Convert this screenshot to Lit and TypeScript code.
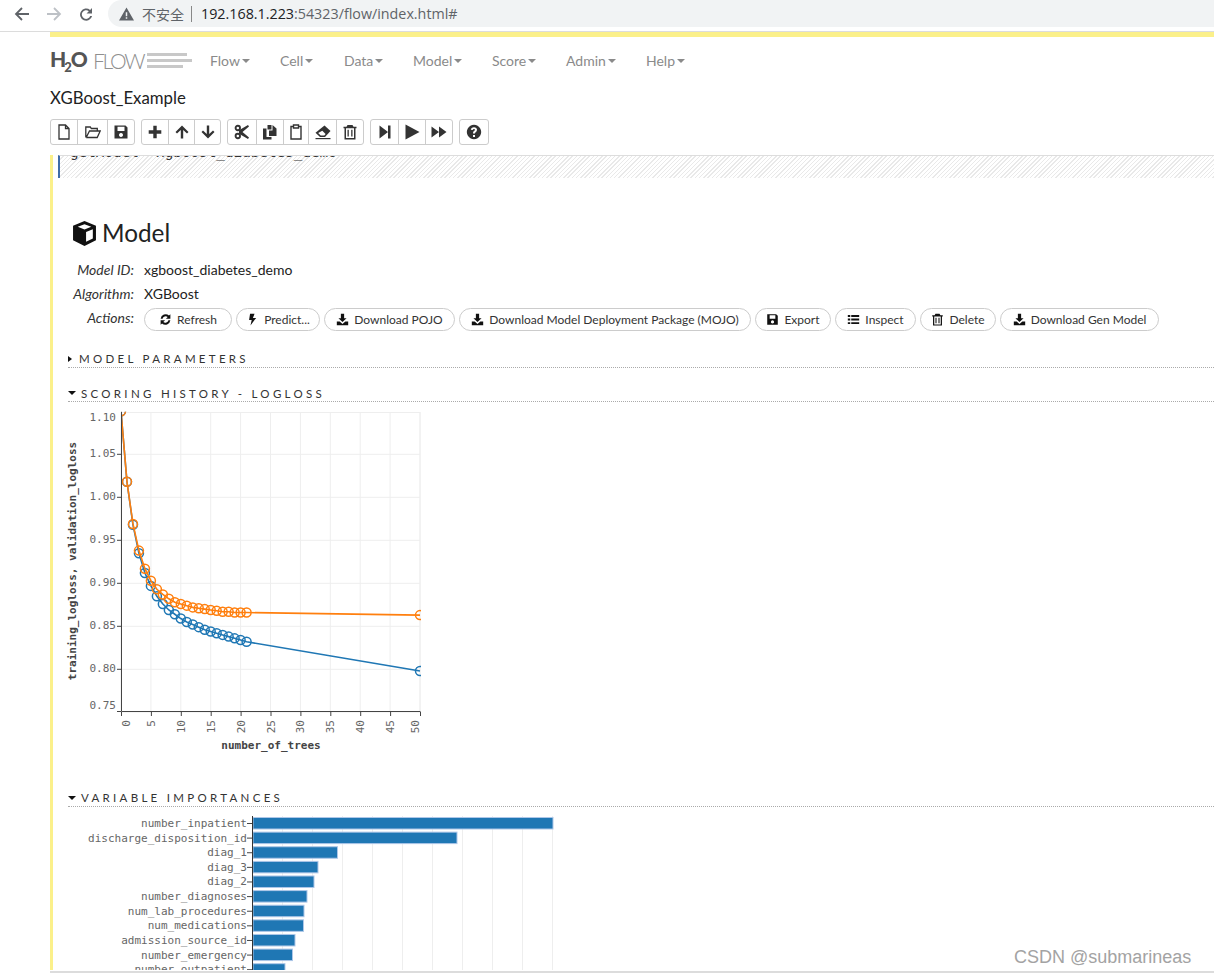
import { LitElement, html, css, svg } from "lit";
import { customElement } from "lit/decorators.js";

const ICONS: Record<string, any> = {
  file: svg`<path d="M3 1h6.500l3.500 3.500V15H3z M9.500 1v3.500H13" fill="none" stroke="currentColor" stroke-width="1.300"/>`,
  open: svg`<path d="M.8 13.500V3h4.500l1 1.500h6V7H4.500L1.200 13.500 M1.200 13.500h11l3-6.500H4.500" fill="none" stroke="currentColor" stroke-width="1.300"/>`,
  save: svg`<path fill-rule="evenodd" d="M1.500 1.500h11l2 2v11h-13z M4.500 2.800v4.200h7V2.800z M8 9a2 2 0 1 0 .01 0z"/>`,
  plus: svg`<path d="M6.300 1.700h3.400v4.600H14.300v3.400H9.700v4.600H6.300V9.700H1.700V6.300h4.600z"/>`,
  up: svg`<path d="M8 1.500l6.500 6.500-1.500 1.500-3.800-3.600V14.500H6.800V5.900L3 9.500 1.500 8z"/>`,
  down: svg`<path d="M8 14.500l6.500-6.500L13 6.500l-3.800 3.600V1.500H6.800v8.600L3 6.500 1.500 8z"/>`,
  cut: svg`<path d="M5 6.300L14 1l1 1.500L8.500 8l6.500 5.500-1 1.500L5 9.700"/><circle cx="3.800" cy="4" r="2.200" fill="none" stroke="currentColor" stroke-width="1.900"/><circle cx="3.800" cy="12" r="2.200" fill="none" stroke="currentColor" stroke-width="1.900"/>`,
  copy: svg`<path d="M5.500 1h4v4.500h-4z M10.500 1l4 3.500V12H7V6.500h3.500z M1 4.500h3.500V13H9.500V15.500H1z"/>`,
  paste: svg`<path d="M5.500 2.500H3V15h10V2.500h-2.500 M5.500 1h5v3h-5z" fill="none" stroke="currentColor" stroke-width="1.400"/>`,
  eraser: svg`<path d="M9.500 1.500L15.500 7l-5.500 6H5L.5 8.800z"/><path d="M3.200 9l2.500 2.400h3.600l1.300-1.400-3.300-3.200z" fill="#fff"/><path d="M.5 14h15v1.200H.5z"/>`,
  trash: svg`<path fill-rule="evenodd" d="M5.500 1h5l1 1.800h3v1.500h-1V15.500H2.500V4.300h-1V2.800h3z M4 4.300V14h8V4.300z M5.500 5.800h1.300v6.800H5.500z M9.200 5.800h1.300v6.800H9.200z"/>`,
  stepf: svg`<path d="M2.500 1.500l8.500 6.500-8.500 6.500z M11 1.500h2.500v13H11z"/>`,
  play: svg`<path d="M1.500.5L15.500 8 1.500 15.500z"/>`,
  ff: svg`<path d="M.5 2.500L8 8 .5 13.500z M8 2.500L15.500 8 8 13.500z"/>`,
  help: svg`<path fill-rule="evenodd" d="M8 .8a7.200 7.200 0 1 0 .01 0z M8 3.200c-1.800 0-3 1-3.200 2.500l1.900.4c.2-.7.6-1.100 1.300-1.100.6 0 1 .3 1 .8 0 1-2 1.200-2 3.300v.5h2v-.3c0-1.200 2-1.400 2-3.600 0-1.600-1.300-2.500-3-2.500z M7 11v2h2v-2z"/>`,
  refresh: svg`<path d="M14 1.500v5.600H8.500l2.200-2.100A3.900 3.900 0 0 0 4.400 7H2a6.200 6.200 0 0 1 10.300-3.800z M2 14.500V8.900h5.500l-2.200 2.100A3.900 3.900 0 0 0 11.600 9H14a6.200 6.200 0 0 1-10.300 3.800z"/>`,
  bolt: svg`<path d="M5 1h5.500L8.500 6H12.500L5.500 15.500l1.500-7H3.800z"/>`,
  download: svg`<path d="M6 1h4v5.500h3L8 11.200 3 6.500h3z M1 10.500h3.500L8 13.400l3.500-2.900H15v4.500H1z"/>`,
  list: svg`<path d="M1 2.500h3v2.300H1z M5.200 2.500H15v2.300H5.200z M1 6.900h3v2.300H1z M5.200 6.900H15v2.300H5.200z M1 11.300h3v2.300H1z M5.200 11.300H15v2.300H5.200z"/>`,
};

const icon = (name: string, cls = "") =>
  html`<svg class="ic ${cls}" viewBox="0 0 16 16" aria-hidden="true">${ICONS[name]}</svg>`;

const TOOLBAR: { icon: string; w: number }[][] = [
  [{ icon: "file", w: 26 }, { icon: "open", w: 30 }, { icon: "save", w: 27 }],
  [{ icon: "plus", w: 26 }, { icon: "up", w: 26 }, { icon: "down", w: 26 }],
  [{ icon: "cut", w: 28 }, { icon: "copy", w: 27 }, { icon: "paste", w: 25 }, { icon: "eraser", w: 28 }, { icon: "trash", w: 27 }],
  [{ icon: "stepf", w: 27 }, { icon: "play", w: 27 }, { icon: "ff", w: 27 }],
  [{ icon: "help", w: 28 }],
];

const NAV = [
  ["Flow", 70], ["Cell", 64], ["Data", 69], ["Model", 79], ["Score", 74], ["Admin", 80], ["Help", 50],
] as [string, number][];

const ACTIONS: [string, string, number][] = [
  ["refresh", "Refresh", 88], ["bolt", "Predict...", 84], ["download", "Download POJO", 131],
  ["download", "Download Model Deployment Package (MOJO)", 292], ["save", "Export", 76],
  ["list", "Inspect", 81], ["trash", "Delete", 76], ["download", "Download Gen Model", 159],
];

const ORANGE = [1.1,1.018,.969,.938,.917,.903,.893,.887,.882,.878,.876,.874,.872,.871,.870,.869,.868,.867,.867,.866,.866,.866];
const BLUE = [1.1,1.018,.968,.935,.912,.897,.885,.876,.869,.864,.859,.855,.852,.849,.846,.844,.842,.840,.838,.836,.834,.832];

// The line chart's own origin is (66,405) on the page.
const X = (n: number) => 121 + 5.98 * n - 66;
const Y = (v: number) => 497.3 + (1 - v) * 860 - 405;
const pts = (a: number[], last: number) => [...a.map((v, i) => [X(i), Y(v)]), [X(50), Y(last)]];

function series(a: number[], last: number, color: string) {
  const p = pts(a, last);
  return svg`<polyline points=${p.map((q) => q.join(",")).join(" ")} fill="none" stroke=${color} stroke-width="1.600"/>
    ${p.map((q) => svg`<circle cx=${q[0]} cy=${q[1]} r="4.500" fill="none" stroke=${color} stroke-width="1.500"/>`)}`;
}

const lineChart = () => {
  const yt = [1.05, 1.0, 0.95, 0.9, 0.85, 0.8];
  const xt = Array.from({ length: 11 }, (_, i) => i * 5);
  const lx = (n: number) => X(n) + (n === 0 ? 9 : n === 50 ? -1 : 4);
  return svg`<svg class="line" width="370" height="350" viewBox="0 0 370 350">
    <defs><clipPath id="plot"><rect x=${X(0)} y=${Y(1.1) + 0.5} width="300" height="301"/></clipPath></defs>
    <rect x=${X(0)} y="7.500" width="299" height="299.500" fill="none" stroke="#eee"/>
    ${xt.slice(1).map((n) => svg`<line x1=${X(n)} x2=${X(n)} y1="7" y2="307" stroke="#eee"/>`)}
    ${yt.map((v) => svg`<line x1=${X(0)} x2=${X(50)} y1=${Y(v)} y2=${Y(v)} stroke="#eee"/>`)}
    <g clip-path="url(#plot)">${series(BLUE, 0.798, "#1f77b4")}${series(ORANGE, 0.863, "#ff7f0e")}</g>
    <path d="M${X(0) + 0.5} 7V306.500H${X(50) + 0.5}" fill="none" stroke="#444" stroke-width="1"/>
    ${yt.map((v) => svg`<line x1=${X(0) - 4} x2=${X(0)} y1=${Y(v)} y2=${Y(v)} stroke="#444"/>`)}
    <line x1=${X(0) - 4} x2=${X(0)} y1="306.500" y2="306.500" stroke="#444"/>
    ${xt.map((n) => svg`<line x1=${X(n) + 0.5} x2=${X(n) + 0.5} y1="307" y2="311" stroke="#444"/>`)}
    <text class="tick" x="50" y="16" text-anchor="end">1.10</text>
    ${yt.map((v) => svg`<text class="tick" x="50" y=${Y(v) + 3} text-anchor="end">${v.toFixed(2)}</text>`)}
    <text class="tick" x="50" y="304" text-anchor="end">0.75</text>
    ${xt.map((n) => svg`<text class="tick" transform="translate(${lx(n)} 315) rotate(-90)" text-anchor="end">${n}</text>`)}
    <text class="axis" transform="translate(10 156) rotate(-90)" text-anchor="middle">training_logloss, validation_logloss</text>
    <text class="axis" x="205" y="344" text-anchor="middle">number_of_trees</text>
  </svg>`;
};

const VARS: [string, number][] = [
  ["number_inpatient", 553], ["discharge_disposition_id", 457], ["diag_1", 337.5], ["diag_3", 318], ["diag_2", 314],
  ["number_diagnoses", 307], ["num_lab_procedures", 304], ["num_medications", 303.5], ["admission_source_id", 295],
  ["number_emergency", 292.5], ["number_outpatient", 285],
];

// The bar chart's own origin is (66,815) on the page.
const barChart = () => svg`<svg class="bars" width="500" height="170" viewBox="0 0 500 170">
  ${Array.from({ length: 10 }, (_, i) => svg`<line x1=${216.500 + i * 30} x2=${216.500 + i * 30} y1="2" y2="170" stroke="#eee"/>`)}
  ${VARS.map(([name, right], i) => {
    const y = 3 + i * 14.62;
    return svg`<rect x="187" y=${y + 0.5} width=${right - 253} height="11.500" fill="#1f77b4" stroke="#aec7e8"/>
      <line x1="181" x2="186" y1=${y + 6.5} y2=${y + 6.5} stroke="#444"/>
      <text class="tick" x="181" y=${y + 10} text-anchor="end">${name}</text>`;
  })}
  <line x1="186.500" x2="186.500" y1="2" y2="170" stroke="#333"/>
</svg>`;

@customElement("app-root")
export class AppRoot extends LitElement {
  static styles = css`
    :host { display: block; width: 1214px; height: 974px; overflow: hidden; position: relative; background: #fff; font-family: Lato, "Noto Sans CJK SC", sans-serif; color: #222; }
    .chrome { height: 32px; border-bottom: 1px solid #dcdcdc; box-sizing: border-box; display: flex; align-items: flex-start; }
    .navbtns { width: 108px; flex: none; height: 27px; display: flex; align-items: center; padding-left: 14px; box-sizing: border-box; gap: 16px; }
    .navbtns svg { width: 16px; height: 16px; flex: none; }
    .addr { flex: none; width: 1106px; height: 27px; background: #f1f3f4; border-radius: 14px 0 0 14px; display: flex; align-items: center; padding-left: 11px; box-sizing: border-box; font-family: "Liberation Sans", "Noto Sans CJK SC", sans-serif; font-size: 14px; color: #5f6368; }
    .warn { width: 15px; height: 14px; fill: #5f6368; margin-right: 8px; flex: none; }
    .insecure { font-size: 14px; }
    .sep { width: 1px; height: 16px; background: #888; margin: 0 9px 0 7px; }
    .url { font-family: "Open Sans", sans-serif; font-size: 14.300px; color: #5f6368; }
    .url b { font-weight: 400; color: #202124; }
    .page { margin-left: 50px; display: flex; flex-direction: column; }
    .strip { height: 5px; background: #fbf08a; }
    .navbar { height: 46px; display: flex; align-items: center; }
    .logo { width: 160px; flex: none; display: flex; align-items: center; height: 26px; margin-top: 1px; }
    .h2o { font-weight: 900; font-size: 21px; color: #555; line-height: 21px; width: 43px; display: flex; align-items: flex-start; }
    .h2o sub { font-size: 13px; line-height: 13px; margin: 13px -1px 0 -2px; }
    .flow { font-weight: 300; font-size: 21px; color: #8f8f8f; width: 54px; letter-spacing: -2.300px; line-height: 1; }
    .lines { display: flex; flex-direction: column; gap: 3px; }
    .lines i { display: block; height: 3px; background: #c8c8c8; }
    .l1 { width: 40px; } .l2 { width: 45px; } .l3 { width: 36px; }
    .menu { display: flex; font-size: 14px; color: #8a8a8a; }
    .menu span { display: flex; align-items: center; gap: 2px; }
    .caret { width: 0; height: 0; margin-top: 2px; border-left: 4px solid transparent; border-right: 4px solid transparent; border-top: 4px solid currentColor; display: inline-block; }
    .title { font-size: 16.800px; line-height: 24px; margin-top: 3px; color: #222; }
    .toolbar { display: flex; gap: 6px; margin-top: 9px; height: 26px; }
    .grp { display: flex; border: 1px solid #ccc; border-radius: 3px; }
    .tb { display: flex; align-items: center; justify-content: center; border-left: 1px solid #ccc; box-sizing: border-box; color: #333; }
    .tb:first-child { border-left: 0; }
    .ic { width: 16px; height: 16px; fill: currentColor; flex: none; }
    .scroll { margin-top: 10px; height: 815px; border-left: 3px solid #fbf08a; overflow: hidden; box-sizing: content-box; }
    .editor { margin-left: 5px; height: 22px; border-left: 2px solid #3f6ba8; border-top: 1px solid #ddd; position: relative; overflow: hidden;
      background: repeating-linear-gradient(135deg, #fff 0 2px, #e9e9e9 2px 3px); }
    .code { position: absolute; left: 10px; top: -12px; font: 14.300px/16px "DejaVu Sans Mono", monospace; color: #333; white-space: pre; }
    .body { margin-left: 15px; }
    h1 { margin: 40px 0 0 4px; display: flex; align-items: center; gap: 5px; font-weight: 400; font-size: 24.300px; line-height: 30px; color: #222; }
    .cube { width: 25px; height: 25px; flex: none; }
    .kv { display: grid; grid-template-columns: 66px 1fr; column-gap: 10px; margin-top: 10px; font-size: 14px; row-gap: 0; }
    .kv .k { font-style: italic; text-align: right; line-height: 24px; color: #333; }
    .kv .v { line-height: 24px; color: #222; }
    .acts { display: flex; gap: 4px; }
    .pill { display: flex; align-items: center; justify-content: center; gap: 5px; height: 23px; margin-top: 2px; border: 1px solid #ccc; border-radius: 12px; box-sizing: border-box; font-size: 12px; color: #333; white-space: nowrap; }
    .pill .ic { width: 13px; height: 13px; color: #111; }
    .sec { font-size: 11.500px; letter-spacing: 3.300px; border-bottom: 1px dotted #aaa; display: flex; align-items: center; gap: 5px; height: 17px; color: #333; white-space: nowrap; }
    .sec i { width: 0; height: 0; display: block; }
    .right { border-top: 3px solid transparent; border-bottom: 3px solid transparent; border-left: 4px solid #111; margin-right: 2px; }
    .down { border-left: 4px solid transparent; border-right: 4px solid transparent; border-top: 4px solid #111; }
    .s1 { margin-top: 19px; }
    .s2 { margin-top: 17px; height: 16px; }
    .s3 { margin-top: 34px; }
    svg.line, svg.bars { display: block; margin-left: -2px; }
    svg.line { margin-top: 3px; }
    svg.bars { margin-top: 7px; }
    text { font-family: "DejaVu Sans Mono", monospace; }
    text.tick { font-size: 11px; fill: #666; }
    text.axis { font-size: 11px; font-weight: 700; fill: #444; }
    .rule { position: absolute; left: 50px; right: 0; top: 971px; height: 2px; background: #dcdcdc; }
    .mark { position: absolute; left: 1014px; top: 946px; font: 18px/22px "Liberation Sans", sans-serif; color: #a3a3a3; }
  `;

  render() {
    return html`
      <div class="chrome">
        <div class="navbtns">
          <svg viewBox="0 0 16 16" fill="none" stroke="#5f6368" stroke-width="1.800"><path d="M15 8H2M8 2L2 8l6 6"/></svg>
          <svg viewBox="0 0 16 16" fill="none" stroke="#bdc1c6" stroke-width="1.800"><path d="M1 8h13M8 2l6 6-6 6"/></svg>
          <svg viewBox="0 0 16 16"><path d="M14 2v5.500H8.500l2.300-2.300A4.300 4.300 0 1 0 12.200 10h1.900a6.100 6.100 0 1 1-2-6.100z" fill="#5f6368"/></svg>
        </div>
        <div class="addr">
          <svg class="warn" viewBox="0 0 16 14"><path fill-rule="evenodd" d="M8 0l8 14H0z M7.200 5v4.500h1.600V5z M7.200 10.500v1.500h1.600v-1.500z"/></svg>
          <span class="insecure">不安全</span><span class="sep"></span>
          <span class="url"><b>192.168.1.223</b>:54323/flow/index.html#</span>
        </div>
      </div>
      <div class="page">
        <div class="strip"></div>
        <div class="navbar">
          <div class="logo">
            <span class="h2o">H<sub>2</sub>O</span><span class="flow">FLOW</span>
            <span class="lines"><i class="l1"></i><i class="l2"></i><i class="l3"></i></span>
          </div>
          <div class="menu">${NAV.map(([n, w]) => html`<span style="width:${w}px">${n}<i class="caret"></i></span>`)}</div>
        </div>
        <div class="title">XGBoost_Example</div>
        <div class="toolbar">
          ${TOOLBAR.map((g) => html`<div class="grp">${g.map((b) => html`<span class="tb" style="width:${b.w}px">${icon(b.icon)}</span>`)}</div>`)}
        </div>
        <div class="scroll">
          <div class="editor"><div class="code">getModel "xgboost_diabetes_demo"</div></div>
          <div class="body">
            <h1>
              <svg class="cube" viewBox="0 0 24 24"><path fill="#111" fill-rule="evenodd" d="M12 0l11 4.500v14L12 24 1 18.500v-14z M12 3L5.500 5.500 12 8.200l6.500-2.700z M13.500 10.500v9.500l6.500-3.200V7.800z"/></svg>
              Model
            </h1>
            <div class="kv">
              <span class="k">Model ID:</span><span class="v">xgboost_diabetes_demo</span>
              <span class="k">Algorithm:</span><span class="v">XGBoost</span>
              <span class="k">Actions:</span>
              <div class="acts">${ACTIONS.map(([i, t, w]) => html`<span class="pill" style="width:${w}px">${icon(i)}${t}</span>`)}</div>
            </div>
            <div class="sec s1"><i class="right"></i>MODEL PARAMETERS</div>
            <div class="sec s2"><i class="down"></i>SCORING HISTORY - LOGLOSS</div>
            ${lineChart()}
            <div class="sec s3"><i class="down"></i>VARIABLE IMPORTANCES</div>
            ${barChart()}
          </div>
        </div>
      </div>
      <div class="rule"></div>
      <div class="mark">CSDN @submarineas</div>
    `;
  }
}
